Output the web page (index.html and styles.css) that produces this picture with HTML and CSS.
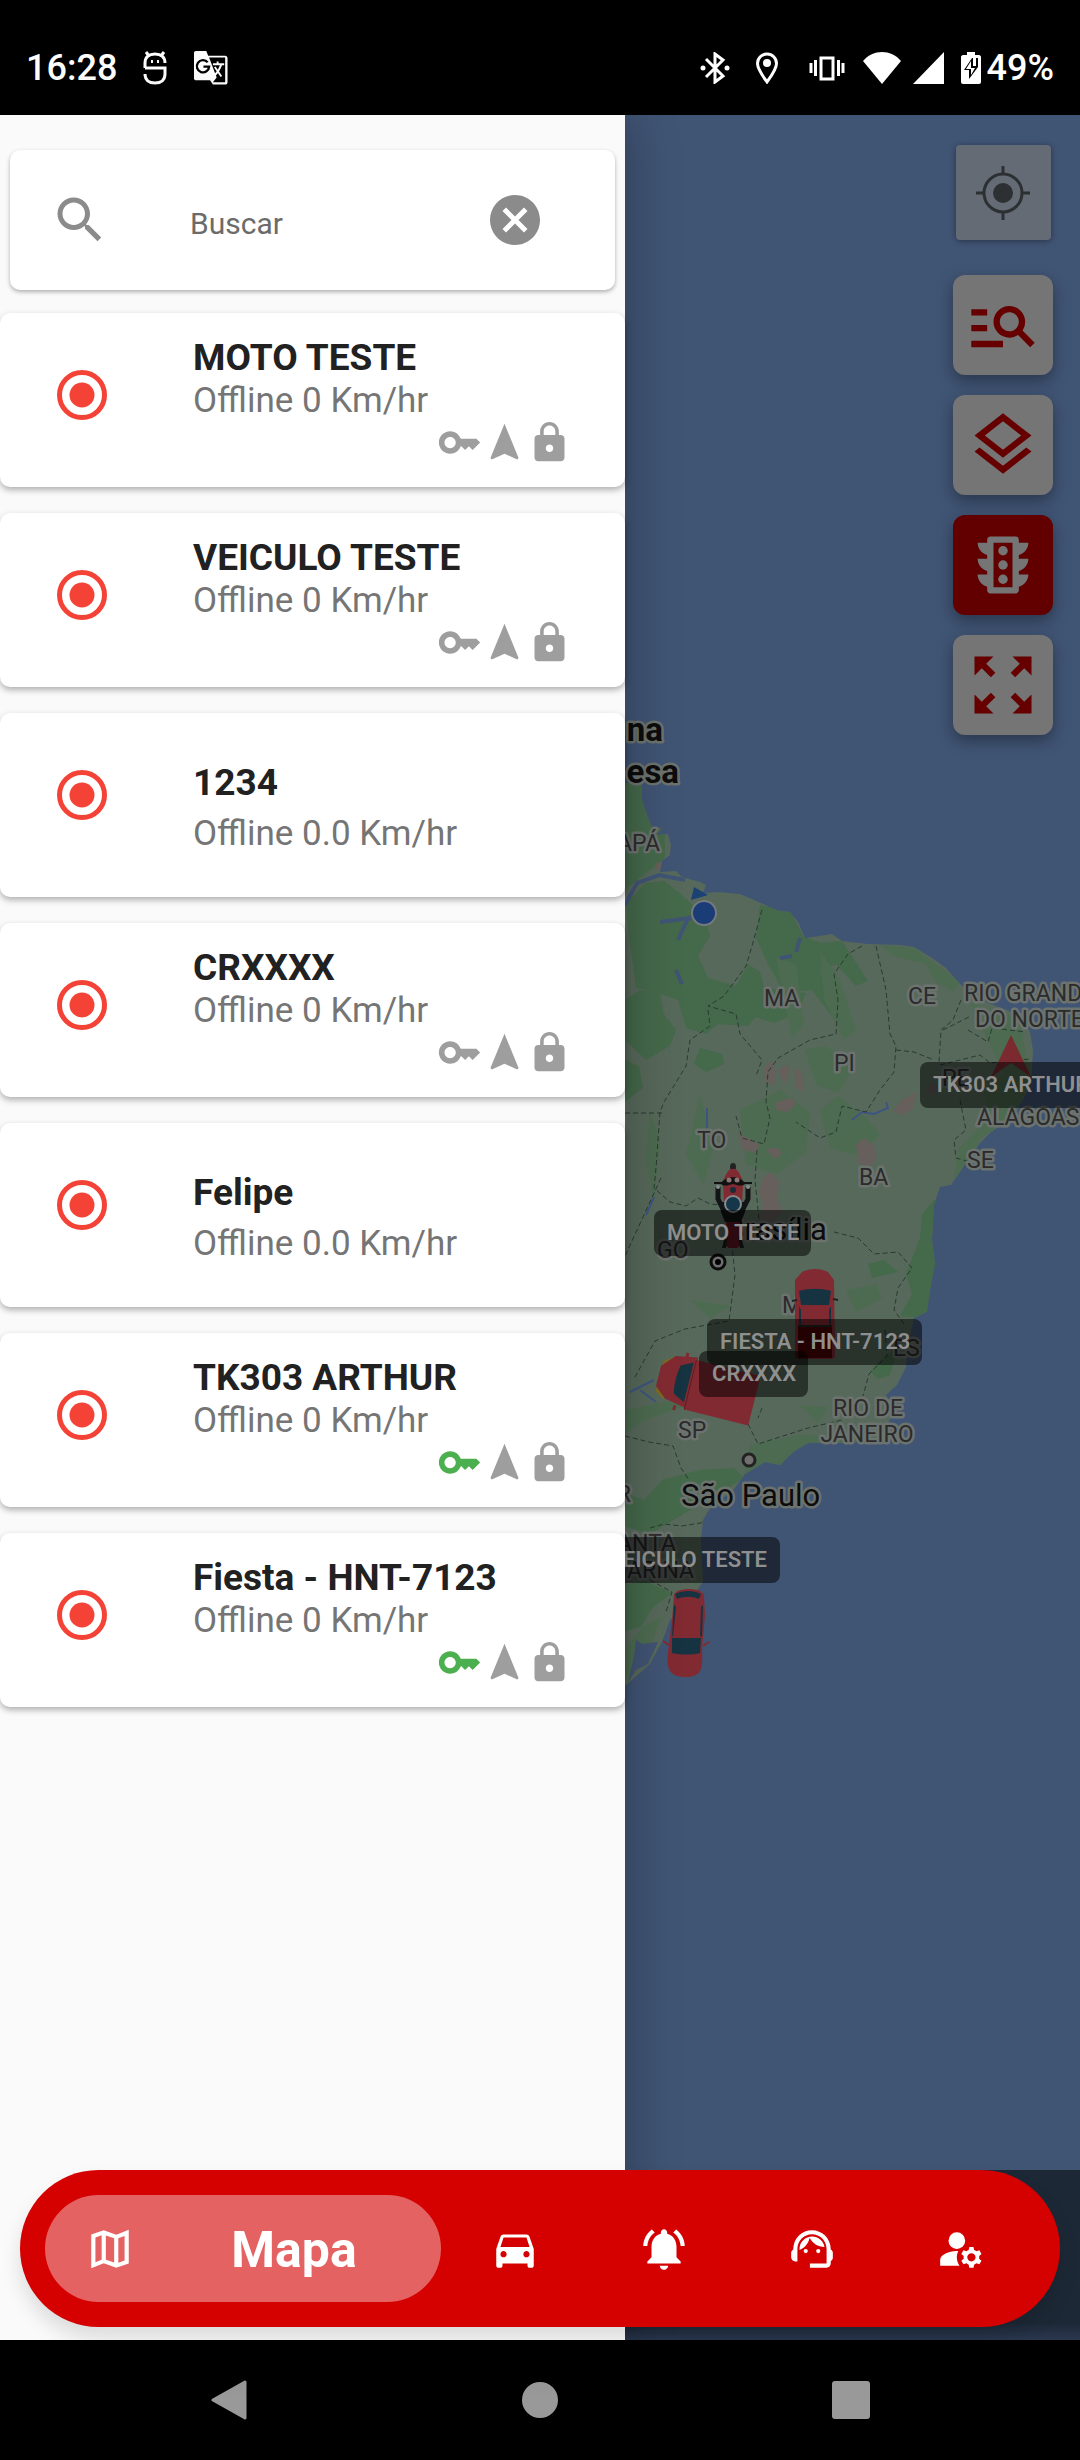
FILE: index.html
```html
<!DOCTYPE html>
<html lang="pt-BR">
<head>
  <meta charset="UTF-8">
  <meta name="viewport" content="width=device-width, initial-scale=1.0">
  <title>Mapa</title>
  <link rel="stylesheet" href="styles.css">
</head>
<body>

  <!-- icon sprite -->
  <svg class="sprite" aria-hidden="true">
    <symbol id="i-radio" viewBox="0 0 24 24"><circle cx="12" cy="12" r="9" fill="none" stroke="currentColor" stroke-width="2"/><circle cx="12" cy="12" r="5"/></symbol>
    <symbol id="i-key" viewBox="0 0 24 24"><path d="M21 10h-8.35C11.83 7.67 9.61 6 7 6c-3.31 0-6 2.69-6 6s2.69 6 6 6c2.61 0 4.83-1.67 5.65-4H13l2 2 2-2 2 2 4-4.04L21 10zM7 15c-1.65 0-3-1.35-3-3s1.35-3 3-3 3 1.35 3 3-1.35 3-3 3z"/></symbol>
    <symbol id="i-nav" viewBox="0 0 24 24"><path d="M12 2L4.5 20.29l.71.71L12 18l6.79 3 .71-.71z"/></symbol>
    <symbol id="i-lock" viewBox="0 0 24 24"><path d="M18 8h-1V6c0-2.76-2.24-5-5-5S7 3.24 7 6v2H6c-1.1 0-2 .9-2 2v10c0 1.1.9 2 2 2h12c1.1 0 2-.9 2-2V10c0-1.1-.9-2-2-2zm-6 9c-1.1 0-2-.9-2-2s.9-2 2-2 2 .9 2 2-.9 2-2 2zm3.1-9H8.9V6c0-1.71 1.39-3.1 3.1-3.1 1.71 0 3.1 1.39 3.1 3.1v2z"/></symbol>
  </svg>

  <header class="statusbar">
    <div class="status-left">
      <span>16:28</span>
      <svg class="st-app" viewBox="0 0 24 34" fill="none" stroke="#fff" stroke-width="3"><path d="M2 17h20v6c0 6-4 9-10 9s-10-3-10-9M22 12c0-6-4-9-10-9S2 6 2 12v5M3 1l3 4M21 1l-3 4"/><path d="M8 10.500h2M14 10.500h2"/></svg>
      <svg class="st-app st-translate" viewBox="0 0 36 36"><path fill="#fff" d="M2 0h11l2 5h18c1.500 0 2.500 1 2.500 2.500V33c0 1.500-1 2.500-2.500 2.500H20L17 31H2c-1 0-2-1-2-2V2C0 1 1 0 2 0z"/><path d="M16 7h17v26H20l4-5z"/><path fill="none" stroke="#000" stroke-width="2.500" d="M14.500 12a6.500 6.500 0 1 0 1.500 4.500H10"/><path fill="none" stroke="#fff" stroke-width="2" d="M20 14h12M25 11v3M29 14c-2 6-4 9-8 13M22 17l7 10"/></svg>
    </div>
    <div class="status-right">
      <svg class="st-52" viewBox="0 0 28 32"><path fill="none" stroke="#fff" stroke-width="3" d="M5 7l17 17-8 6V2l8 6L5 25"/><circle cx="2" cy="16" r="2.500" fill="#fff"/><circle cx="26" cy="16" r="2.500" fill="#fff"/></svg>
      <svg class="st-52" viewBox="0 0 24 32"><path fill="none" stroke="#fff" stroke-width="3" d="M12 30C7 23 2.500 17 2.500 11.500a9.500 9.500 0 0 1 19 0C21.500 17 17 23 12 30z"/><circle cx="12" cy="11" r="4" fill="#fff"/></svg>
      <svg class="st-68" viewBox="0 0 36 32"><path fill="none" stroke="#fff" stroke-width="3" d="M12 6h12v21H12zM6.500 8v16M2 11v10M29.500 8v16M34 11v10"/></svg>
      <svg class="st-42" viewBox="0 0 38 32"><path fill="#fff" d="M19 32L0 9C10-3 28-3 38 9z"/></svg>
      <svg class="st-52" viewBox="0 0 32 32"><path fill="#fff" d="M0 32L31 0v32z"/></svg>
      <svg class="st-32" viewBox="0 0 20 32"><path fill="#fff" d="M6 0h8v3h4c1 0 2 1 2 2v25c0 1-1 2-2 2H2c-1 0-2-1-2-2V5c0-1 1-2 2-2h4z"/><path d="M11 6L3 18h5v9l9-12V6h-2v8h-3V6z"/><path fill="#fff" d="M10 9l-5 8h5v6l4-7h-4z"/></svg>
      <span>49%</span>
    </div>
  </header>

  <main class="app">
    <aside class="drawer">
      <form class="search">
        <svg class="icon" viewBox="0 0 24 24"><path d="M15.500 14h-.79l-.28-.27C15.410 12.590 16 11.110 16 9.500 16 5.910 13.090 3 9.500 3S3 5.910 3 9.500 5.910 16 9.500 16c1.610 0 3.090-.59 4.230-1.570l.27.28v.79l5 4.990L20.490 19l-4.990-5zm-6 0C7.010 14 5 11.990 5 9.500S7.010 5 9.500 5 14 7.010 14 9.500 11.990 14 9.500 14z"/></svg>
        <input type="text" placeholder="Buscar" aria-label="Buscar">
        <button type="button" aria-label="Limpar"><svg class="icon" viewBox="0 0 24 24"><path d="M12 2C6.470 2 2 6.470 2 12s4.470 10 10 10 10-4.470 10-10S17.530 2 12 2zm5 13.590L15.590 17 12 13.410 8.410 17 7 15.590 10.590 12 7 8.410 8.410 7 12 10.590 15.590 7 17 8.410 13.410 12 17 15.590z"/></svg></button>
      </form>

      <ul class="devices">
        <li class="device">
          <svg class="icon status"><use href="#i-radio"/></svg>
          <div class="info">
            <h2>MOTO TESTE</h2>
            <p>Offline 0 Km/hr</p>
            <div class="sensors"><svg><use href="#i-key"/></svg><svg><use href="#i-nav"/></svg><svg><use href="#i-lock"/></svg></div>
          </div>
        </li>
        <li class="device">
          <svg class="icon status"><use href="#i-radio"/></svg>
          <div class="info">
            <h2>VEICULO TESTE</h2>
            <p>Offline 0 Km/hr</p>
            <div class="sensors"><svg><use href="#i-key"/></svg><svg><use href="#i-nav"/></svg><svg><use href="#i-lock"/></svg></div>
          </div>
        </li>
        <li class="device no-sensors">
          <svg class="icon status"><use href="#i-radio"/></svg>
          <div class="info">
            <h2>1234</h2>
            <p>Offline 0.0 Km/hr</p>
          </div>
        </li>
        <li class="device">
          <svg class="icon status"><use href="#i-radio"/></svg>
          <div class="info">
            <h2>CRXXXX</h2>
            <p>Offline 0 Km/hr</p>
            <div class="sensors"><svg><use href="#i-key"/></svg><svg><use href="#i-nav"/></svg><svg><use href="#i-lock"/></svg></div>
          </div>
        </li>
        <li class="device no-sensors">
          <svg class="icon status"><use href="#i-radio"/></svg>
          <div class="info">
            <h2>Felipe</h2>
            <p>Offline 0.0 Km/hr</p>
          </div>
        </li>
        <li class="device">
          <svg class="icon status"><use href="#i-radio"/></svg>
          <div class="info">
            <h2>TK303 ARTHUR</h2>
            <p>Offline 0 Km/hr</p>
            <div class="sensors"><svg class="on"><use href="#i-key"/></svg><svg><use href="#i-nav"/></svg><svg><use href="#i-lock"/></svg></div>
          </div>
        </li>
        <li class="device">
          <svg class="icon status"><use href="#i-radio"/></svg>
          <div class="info">
            <h2>Fiesta - HNT-7123</h2>
            <p>Offline 0 Km/hr</p>
            <div class="sensors"><svg class="on"><use href="#i-key"/></svg><svg><use href="#i-nav"/></svg><svg><use href="#i-lock"/></svg></div>
          </div>
        </li>
      </ul>
    </aside>

    <section class="map-pane">
      <svg class="map" viewBox="625 115 455 2055" preserveAspectRatio="xMinYMin slice">
        <defs>
          <clipPath id="land"><path id="coast" d="M620 783L642 783 642 800 647 815 652 828 662 828 656 835 668 834 671 845 670 855 662 861 660 872 676 871 682 877 700 882 706 885 703 893 718 892 740 894 752 899 765 905 779 911 790 912 798 922 805 938 813 937 832 934 842 941 868 944 900 945 914 947 932 958 946 968 960 984 980 1000 1020 1015 1030 1032 1033 1050 1032 1072 1027 1092 1013 1117 990 1133 980 1143 966 1163 951 1185 940 1187 934 1205 932 1240 935 1264 930 1290 927 1312 914 1318 908 1345 906 1367 897 1385 886 1395 895 1410 880 1438 850 1443 808 1443 793 1452 780 1465 765 1462 745 1474 732 1492 712 1505 703 1520 701 1540 703 1582 690 1600 670 1620 662 1642 650 1664 625 1686 620 1690z"/></clipPath>
        </defs>
        <rect x="625" y="115" width="455" height="2055" fill="#405474"/>
        <use href="#coast" fill="#57695b"/>

        <g clip-path="url(#land)">
          <g fill="#45694b">
            <path d="M620 783h30l5 25 10 20v30l-40 32z"/>
            <path d="M625 905l20-22 20-2 18 15 22 20 5 20-12 20 10 22 28 8 12-22 12 8 8 30-20 24-30-2-12 10-20-6-8-28-22-8-20-4z"/>
            <path d="M760 905l30 6 14 26 18 6 20-2 26 40-12 5-20-22-16 8 18 34-6 10-20-26-28 2-16-28-12-26z"/>
            <path d="M754 993l20-4 32 4-8 20-24 10-24-8zM640 990l20 2 4 22 12 16-6 16-24 14-21-20v-40z"/>
            <path d="M625 1060l14 6 4 22-18 14zM700 1048l22 6 2 10-18 8-12-8z"/>
            <path d="M934 1200l-12 14-2 24-14 36 6 20-12 22 16 2 12-8 10-60 2-50zM884 1260l-16 4 4 14 26-6zM900 1345l-10 30-12 4-8-8 14-14z"/>
            <path d="M700 1470l-38 10-18 20-20-8v34l26 8 30-18 24-14 40-24-10-10zM625 1585l20-4 28 12-20 14-12 20-16 4z"/>
          </g>
          <g fill="#4d6b50">
            <path d="M880 945l34 3 46 34-6 10-18-10-10-18-32-8zM970 1003l50 16 10 60-14 34-36 26-12 30-14 10 4-30 30-30-4-26 20-20z"/>
            <path d="M650 1110l10 30-6 60-8-40zM700 1095l14 50-10 40-18-30zM740 1110l40-20 30 22-4 40-30 22-30-10z"/>
            <path d="M805 1050l20-4 30 20-16 26-22-6zM820 1110l18-14 26 20 16 18-22 22-28-8z"/>
            <path d="M820 950l20 30 16 50-12 10-20-40zM776 958l20 6 8 60-12 14z"/>
            <path d="M625 1410l50-10 10 6-40 14-20 14zM690 1300l40 6-20 12zM846 1290l30-6 6 14-26 14zM800 1405l28 2-10 16zM625 1650l18-24 20-10-18 40-20 24z"/>
            <path d="M750 1445l50-10 60 2 20-12-4 20-70 2-34 30-30 4z"/>
          </g>
          <g fill="#665f5c">
            <path d="M764 1068l8-8 4 12-2 14-8-4zM778 1070l10-6 2 10-6 10zM794 1068l8 4 2 20-8-4zM776 1102l16-4 4 6-8 8-12-2z"/>
            <path d="M738 1133l12 6 10 6-6 8-12-4zM766 1149l12-1 4 6-8 5zM763 1178l8-6 8 10-2 18 6 12-18 16-6-10 4-14-4-12z"/>
            <path d="M856 1144l8-6 10 8 2 14-8 8-10-6zM893 1112l8-12 10-5 6-4-4 18-10 6zM926 1088l10-5 2 8-8 4zM655 864l10-4 2 8-12 2z"/>
          </g>
          <g fill="none" stroke="#405474" stroke-width="4">
            <path d="M625 905l12-22 22-8 26 5M660 922l30-4 12-8M678 940l10-22M676 970l6 14M800 938l-4 14M780 958l12-2"/>
          </g>
          <g fill="none" stroke="#3d5582" stroke-width="2">
            <path d="M852 1120l10-8 12 2 14-6-2-6M707 1108v26M640 1390l16 12M630 1392l24-12M646 1215l8-18"/>
          </g>
          <path fill="#405474" d="M636 1640l6 4 16-2-10 22-12 6-8 12 6-26z"/>
          <g class="borders">
            <path d="M762 910l-10 36-6 20-22 30-16 10 28 8 4 20 22 26-6 16"/>
            <path d="M708 1010l2 16-20 14-4 26-22 36-4 10-4 56-2 20 16 14 16 4 12-8 12 6 24 2"/>
            <path d="M862 946l-14 8-14 20 4 26-2 34-26 6-32 18-10 14-2 30 4 16-6 26-22-6-6-22"/>
            <path d="M876 946l10 44 4 44 6 12-2 26-14 18-14 22-24-6-6 26-16 6-24-16M896 1050l18 2 20 8"/>
            <path d="M961 1000l-8 20-12 10-2 32M943 1030l28-14M968 1030l20 12 4-14 34 4M960 1100l6 30-12 10 2 18 14 4M940 1065l40-10 10 8 40-4"/>
            <path d="M625 1113h38M661 1178l-36 78M757 1150l-2 30 4 40M834 1232l24 6 16 16 24-2 14 16-14 20-4 22 10 14M731 1235l4 40-6 46-44 8-30 12-20 36M885 1330l2 26-18 18-6 22"/>
            <path d="M625 1436l24 6 24 4 8 22 8 12M748 1424l10 20 50-16 34-8M650 1528l14-4 18 2 24-4M650 1580l22 12-6 20M762 1408l-4 10"/>
          </g>
        </g>

        <!-- place names -->
        <g class="labels">
          <g class="country"><text x="663" y="741" text-anchor="end">na</text><text x="679" y="783" text-anchor="end">esa</text></g>
          <g class="state">
            <text x="660" y="851" text-anchor="end">APÁ</text>
            <text x="764" y="1006">MA</text>
            <text x="908" y="1004">CE</text>
            <text x="964" y="1001">RIO GRANDE</text>
            <text x="975" y="1027">DO NORTE</text>
            <text x="834" y="1071">PI</text>
            <text x="942" y="1086">PE</text>
            <text x="977" y="1125">ALAGOAS</text>
            <text x="697" y="1148">TO</text>
            <text x="967" y="1168">SE</text>
            <text x="859" y="1185">BA</text>
            <text x="657" y="1258">GO</text>
            <text x="782" y="1313">M</text>
            <text x="893" y="1356">ES</text>
            <text x="678" y="1438">SP</text>
            <text x="868" y="1416" text-anchor="middle">RIO DE</text>
            <text x="867" y="1442" text-anchor="middle">JANEIRO</text>
            <text x="631" y="1502" text-anchor="end">R</text>
            <text x="676" y="1551" text-anchor="end">ANTA</text>
            <text x="694" y="1578" text-anchor="end">ARINA</text>
          </g>
          <g class="city"><text x="827" y="1240" text-anchor="end">Brasília</text><text x="681" y="1506">São Paulo</text></g>
        </g>
        <circle cx="718" cy="1262" r="7" fill="#707070" stroke="#0c0c0c" stroke-width="3"/><circle cx="718" cy="1262" r="3"/>
        <circle cx="749" cy="1460" r="6" fill="#707070" stroke="#222" stroke-width="3"/>

        <!-- my position -->
        <path fill="#1b4175" d="M694 887l14 8-17 5z"/>
        <circle cx="704" cy="913" r="12" fill="#1a3d77" stroke="#76797e" stroke-width="2"/>

        <!-- vehicles -->
        <path fill="#7b2a30" d="M1011 1035l20 42-20-14-20 14z"/>
        <g class="moto">
          <path fill="#5e1520" d="M727 1216h12l3 28-5 4h-8l-5-4z"/>
          <path fill="#1a1a1a" d="M725 1236l-3 12h4l2-12zM741 1236l3 12h-4l-2-12z"/>
          <ellipse cx="733" cy="1167" rx="3" ry="4" fill="#222"/>
          <path fill="#822a32" d="M730 1169h6c4 4 6 9 7 14l-1 22h-18l-1-22c1-5 3-10 7-14z"/>
          <path fill="none" stroke="#111" stroke-width="2" d="M714 1183h8M752 1183h-8"/>
          <path fill="#111" d="M721 1184c3-9 21-9 24 0-3 3-8 1-12 0-4 1-9 3-12 0z"/>
          <circle cx="729" cy="1180" r="2.500" fill="#8a7776"/><circle cx="737" cy="1180" r="2.500" fill="#8a7776"/>
          <circle cx="733" cy="1190" r="3" fill="#1b2b38"/>
          <path fill="none" stroke="#121515" stroke-width="5" stroke-linejoin="round" d="M718 1187v12l6 12M748 1187v12l-6 12"/>
          <path fill="#121515" d="M720 1202h26l-1 10-4 10h-16l-4-10z"/>
          <circle cx="718" cy="1187" r="2" fill="#858b8e"/><circle cx="748" cy="1187" r="2" fill="#858b8e"/>
          <circle cx="733" cy="1204" r="8" fill="#16374a" stroke="#858b8e" stroke-width="2"/>
        </g>
        <g class="pickup">
          <path fill="#822a32" d="M802 1272c8-4 18-4 26 0l6 8 1 76c0 2-2 3-4 3h-33c-2 0-3-1-3-3v-76z"/>
          <path fill="#163342" d="M799 1291c10-3 22-3 32 0l-2 14h-28zM799 1306l2 4v16l-2-2zM831 1306l-2 4v16l2-2z"/>
          <path fill="#4a0006" d="M798 1326h34v32h-34z"/>
          <path stroke="#222" stroke-width="2" d="M792 1301l5-1M838 1300l-5-1M798 1326h34"/>
        </g>
        <g class="truck" transform="rotate(14 705 1388)">
          <path fill="#7d6a20" d="M658 1372l10-7v44l-10-6z"/>
          <path fill="#822a32" d="M657 1377l12-13 22-4v52l-22-4-12-10z"/>
          <path fill="#163342" d="M676 1372l12-6v41l-12-6c-2-9-2-20 0-29z"/>
          <path fill="#822a32" d="M690 1363h66v51h-66z"/>
          <path stroke="#5e1d23" d="M690 1363v51"/>
          <path stroke="#822a32" stroke-width="3" d="M680 1363v-5M680 1412v5"/>
        </g>
        <g class="car">
          <path fill="#822a32" d="M674 1595c2-8 28-8 30 0l1 20-3 35c1 18 0 27-16 27-15 0-20-6-18-24l4-33z"/>
          <path fill="#163342" d="M675 1594c8-4 19-4 26 0l-2 5c-7-3-15-3-22 0zM672 1638h29l-1 15c-8 2-19 2-28 0zM674 1605l-2 32 1-1 3-29zM703 1605l-1 32-2-1 1-29z"/>
          <path stroke="#822a32" stroke-width="2" d="M663 1641l6 4M709 1642l-6 4"/>
        </g>

        <!-- vehicle tags -->
        <g class="tags">
          <rect x="920" y="1062" width="190" height="46" rx="8"/>
          <rect x="654" y="1210" width="157" height="46" rx="8"/>
          <rect x="707" y="1319" width="215" height="46" rx="8"/>
          <rect x="699" y="1351" width="109" height="46" rx="8"/>
          <rect x="600" y="1537" width="180" height="46" rx="8"/>
          <text x="933" y="1092">TK303 ARTHUR</text>
          <text x="667" y="1240">MOTO TESTE</text>
          <text x="720" y="1349">FIESTA - HNT-7123</text>
          <text x="712" y="1381">CRXXXX</text>
          <text x="767" y="1567" text-anchor="end">EICULO TESTE</text>
        </g>
      </svg>
      <div class="map-bottom"></div>

      <div class="controls">
        <button class="locate" aria-label="Minha localização"><svg viewBox="0 0 54 54"><circle cx="27" cy="27" r="19" fill="none" stroke="#2d3033" stroke-width="3"/><circle cx="27" cy="27" r="10" fill="#2d3033"/><path stroke="#2d3033" stroke-width="3" d="M27 0v8M27 46v8M0 27h8M46 27h8"/></svg></button>
        <button aria-label="Lista"><svg viewBox="0 0 24 24"><path d="M7 9H2V7h5v2zm0 3H2v2h5v-2zm13.590 7l-3.830-3.830c-.8.52-1.740.83-2.760.83-2.760 0-5-2.240-5-5s2.240-5 5-5 5 2.240 5 5c0 1.020-.31 1.960-.83 2.750L22 17.590 20.590 19zM17 11c0-1.650-1.350-3-3-3s-3 1.350-3 3 1.350 3 3 3 3-1.350 3-3zM2 19h10v-2H2v2z"/></svg></button>
        <button aria-label="Camadas"><svg viewBox="0 0 24 24"><path d="M11.990 18.540l-7.370-5.730L3 14.070l9 7 9-7-1.630-1.270zM12 16l7.360-5.730L21 9l-9-7-9 7 1.630 1.270L12 16zm0-11.470L17.740 9 12 13.470 6.260 9 12 4.530z"/></svg></button>
        <button class="active" aria-label="Trânsito"><svg viewBox="0 0 24 24"><path fill-rule="evenodd" d="M20 10h-3V8.860c1.720-.45 3-2 3-3.860h-3V4c0-.55-.45-1-1-1H8c-.55 0-1 .45-1 1v1H4c0 1.860 1.280 3.410 3 3.860V10H4c0 1.860 1.280 3.410 3 3.860V15H4c0 1.860 1.280 3.410 3 3.860V20c0 .55.45 1 1 1h8c.55 0 1-.45 1-1v-1.140c1.720-.45 3-2 3-3.860h-3v-1.140c1.720-.45 3-2 3-3.860zM9 5h6v14H9z"/><circle cx="12" cy="7.500" r="1.500"/><circle cx="12" cy="12" r="1.500"/><circle cx="12" cy="16.500" r="1.500"/></svg></button>
        <button aria-label="Enquadrar"><svg viewBox="0 0 24 24"><path d="M15 3l2.300 2.300-2.890 2.870 1.420 1.420L18.700 6.700 21 9V3zM3 9l2.300-2.300 2.870 2.890 1.420-1.420L6.700 5.300 9 3H3zm6 12l-2.300-2.300 2.890-2.870-1.420-1.420L5.300 17.300 3 15v6zm12-6l-2.300 2.300-2.870-2.890-1.420 1.420 2.890 2.870L15 21h6z"/></svg></button>
      </div>
    </section>

    <nav class="tabbar">
      <a href="#mapa" class="current">
        <svg viewBox="0 0 24 24"><path fill-rule="evenodd" d="M15 5.100L9 3 3 5.020v16.200l6-2.330 6 2.100 6-2.020V2.770zM5 6.460l3-1.010v11.700l-3 1.160zM10 5.470l4 1.400v11.660l-4-1.400zM19 17.540l-3 1.010V6.860l3-1.160z"/></svg>
        <span>Mapa</span>
      </a>
      <a href="#veiculos" aria-label="Veículos"><svg viewBox="0 0 24 24"><path d="M18.920 6.010C18.720 5.420 18.160 5 17.500 5h-11c-.66 0-1.210.42-1.420 1.010L3 12v8c0 .55.45 1 1 1h1c.55 0 1-.45 1-1v-1h12v1c0 .55.45 1 1 1h1c.55 0 1-.45 1-1v-8l-2.080-5.990zM6.500 16c-.83 0-1.500-.67-1.500-1.500S5.670 13 6.500 13s1.500.67 1.500 1.500S7.330 16 6.500 16zm11 0c-.83 0-1.500-.67-1.500-1.500s.67-1.500 1.500-1.500 1.500.67 1.500 1.500-.67 1.500-1.500 1.500zM5 11l1.500-4.500h11L19 11H5z"/></svg></a>
      <a href="#alertas" aria-label="Alertas"><svg viewBox="0 0 24 24"><path d="M7.580 4.080L6.150 2.650C3.750 4.480 2.170 7.300 2.030 10.500h2c.15-2.650 1.510-4.970 3.550-6.420zm12.390 6.420h2c-.15-3.200-1.730-6.020-4.120-7.850l-1.420 1.430c2.020 1.450 3.390 3.770 3.540 6.420zM18 11c0-3.070-1.640-5.640-4.500-6.320V4c0-.83-.67-1.500-1.500-1.500s-1.500.67-1.500 1.500v.68C7.630 5.360 6 7.920 6 11v5l-2 2v1h16v-1l-2-2v-5zm-6 11c.14 0 .27-.01.4-.04.65-.14 1.180-.58 1.440-1.180.1-.24.15-.5.15-.78h-4c.01 1.100.9 2 2.010 2z"/></svg></a>
      <a href="#suporte" aria-label="Suporte"><svg viewBox="0 0 24 24"><path d="M21 12.220C21 6.730 16.740 3 12 3c-4.690 0-9 3.650-9 9.280-.6.340-1 .98-1 1.720v2c0 1.100.9 2 2 2h1v-6.100c0-3.870 3.130-7 7-7s7 3.130 7 7V19h-8v2h8c1.100 0 2-.9 2-2v-1.220c.59-.31 1-.92 1-1.640v-2.300c0-.7-.41-1.310-1-1.620z"/><circle cx="9" cy="13" r="1"/><circle cx="15" cy="13" r="1"/><path d="M18 11.030C17.520 8.180 15.040 6 12.050 6c-3.030 0-6.290 2.510-6.030 6.450 2.470-1.010 4.330-3.210 4.860-5.890 1.310 2.630 4 4.440 7.120 4.470z"/></svg></a>
      <a href="#conta" aria-label="Conta"><svg viewBox="0 0 24 24"><circle cx="10" cy="8" r="4"/><path d="M10.670 13.020C10.450 13.010 10.230 13 10 13c-2.420 0-4.680.67-6.610 1.820C2.510 15.340 2 16.320 2 17.350V20h9.260C10.470 18.870 10 17.490 10 16c0-1.070.25-2.070.67-2.980zM20.750 16c0-.22-.03-.42-.06-.63l1.140-1.010-1-1.730-1.450.49c-.32-.27-.68-.48-1.080-.63L18 11h-2l-.3 1.490c-.4.15-.76.36-1.080.63l-1.450-.49-1 1.730 1.140 1.010c-.03.21-.06.41-.06.63s.03.42.06.63l-1.140 1.010 1 1.730 1.450-.49c.32.27.68.48 1.080.63L16 21h2l.3-1.490c.4-.15.76-.36 1.080-.63l1.450.49 1-1.730-1.140-1.010c.03-.21.06-.41.06-.63zM17 18c-1.100 0-2-.9-2-2s.9-2 2-2 2 .9 2 2-.9 2-2 2z"/></svg></a>
    </nav>
  </main>

  <footer class="sysnav">
    <button aria-label="Voltar"><svg viewBox="0 0 40 40"><path stroke="#999" stroke-width="3" stroke-linejoin="round" d="M4 20L36 2v36z"/></svg></button>
    <button aria-label="Início"><svg viewBox="0 0 40 40"><circle cx="20" cy="20" r="18"/></svg></button>
    <button aria-label="Recentes"><svg viewBox="0 0 40 40"><rect x="1" y="1" width="38" height="38" rx="3"/></svg></button>
  </footer>

</body>
</html>
```
FILE: styles.css
```css
* {
  box-sizing: border-box;
}

body {
  margin: 0;
  min-height: 100vh;
  display: flex;
  flex-direction: column;
  background: #000;
  font-family: Roboto, "Liberation Sans", sans-serif;
}

button {
  border: 0;
  padding: 0;
  background: none;
  cursor: pointer;
}

svg {
  display: block;
  flex: none;
}

.sprite {
  position: absolute;
  width: 0;
  height: 0;
}

.icon {
  width: 60px;
  height: 60px;
  fill: currentColor;
}

/* status bar */
.statusbar {
  height: 115px;
  padding: 20px 26px 0;
  display: flex;
  justify-content: space-between;
  align-items: center;
  color: #fff;
  font-size: 36px;
  font-weight: 500;
}

.status-left, .status-right {
  display: flex;
  align-items: center;
}

.status-left {
  gap: 24px;
}

.status-right svg {
  height: 32px;
}

.st-app {
  width: 28px;
  height: 34px;
}

.st-translate {
  width: 36px;
}

.st-32 { width: 32px; }
.st-42 { width: 42px; }
.st-52 { width: 52px; }
.st-68 { width: 68px; }

/* app */
.app {
  flex: 1;
  position: relative;
  display: grid;
  grid-template-columns: minmax(0, 625fr) minmax(0, 455fr);
}

.drawer {
  position: relative;
  z-index: 1;
  padding-top: 35px;
  background: #fafafa;
  box-shadow: 0 0 50px rgba(0, 0, 0, 0.3);
}

.search {
  height: 140px;
  margin: 0 10px 23px;
  padding: 0 40px;
  display: flex;
  align-items: center;
  background: #fff;
  border-radius: 10px;
  box-shadow: 0 2px 4px rgba(0, 0, 0, 0.3);
  color: #8b8b8b;
}

.search input {
  flex: 1;
  min-width: 0;
  margin-left: 80px;
  padding: 6px 0 0;
  border: 0;
  outline: 0;
  background: none;
  font: 30px Roboto, "Liberation Sans", sans-serif;
  color: #212121;
}

.search input::placeholder {
  color: #6b6b6b;
  opacity: 1;
}

.search button {
  margin-right: 30px;
  color: #8b8b8b;
}

.devices {
  margin: 0;
  padding: 0 0 180px;
  list-style: none;
  display: flex;
  flex-direction: column;
  gap: 26px;
}

.device {
  display: flex;
  align-items: flex-start;
  padding: 23px 53px 22px 52px;
  background: #fff;
  border-radius: 10px;
  box-shadow: 0 3px 6px rgba(0, 0, 0, 0.3);
}

.status {
  margin: 29px 81px 0 0;
  color: #f44336;
}

.info {
  flex: 1;
}

.device h2 {
  margin: 0;
  font-size: 37px;
  line-height: 43px;
  font-weight: 700;
  color: #212121;
}

.device p {
  margin: 0;
  font-size: 35px;
  line-height: 44px;
  color: #757575;
}

.sensors {
  display: flex;
  justify-content: flex-end;
  margin-top: -3px;
}

.sensors svg {
  width: 45px;
  height: 45px;
  fill: #9e9e9e;
}

.sensors .on {
  fill: #4caf50;
}

.no-sensors {
  padding-top: 48px;
  padding-bottom: 41px;
}

.no-sensors .status {
  margin-top: 4px;
}

.no-sensors p {
  margin-top: 8px;
}

/* map */
.map-pane {
  position: relative;
  display: flex;
  flex-direction: column;
  background: #405474;
}

.map {
  flex: 1;
  width: 100%;
  min-height: 0;
}

.map-bottom {
  height: 170px;
  background: linear-gradient(#1d2836 90%, #2a3750);
}

.borders {
  fill: none;
  stroke: #2a3a31;
  stroke-width: 1;
  stroke-dasharray: 5 3;
}

.labels text {
  paint-order: stroke;
  stroke: #6c736f;
  stroke-width: 5px;
  stroke-linejoin: round;
}

.state {
  font-size: 23px;
  fill: #2b2b2b;
}

.city {
  font-size: 31px;
  fill: #0c0c0c;
}

.country {
  font-size: 33px;
  font-weight: 700;
  fill: #0c0c0c;
}

.tags {
  font-size: 22px;
  font-weight: 600;
  fill: #8f8f8f;
}

.tags rect {
  fill: rgba(0, 0, 0, 0.52);
}

.controls {
  position: absolute;
  top: 30px;
  right: 27px;
  display: flex;
  flex-direction: column;
  align-items: center;
  gap: 20px;
}

.controls button {
  width: 100px;
  height: 100px;
  display: grid;
  place-items: center;
  border-radius: 12px;
  background: #757575;
  box-shadow: 0 6px 16px rgba(0, 0, 0, 0.35);
}

.controls svg {
  width: 76px;
  height: 76px;
  fill: #660000;
}

.controls .active {
  background: #620000;
}

.controls .active svg {
  fill: #757575;
}

.controls .locate {
  width: 95px;
  height: 95px;
  margin-bottom: 15px;
  border-radius: 4px;
  background: #656b75;
  box-shadow: 0 1px 6px rgba(0, 0, 0, 0.4);
}

.controls .locate svg {
  width: 54px;
  height: 54px;
}

/* bottom tabs, float over drawer and map */
.tabbar {
  position: absolute;
  z-index: 2;
  left: 20px;
  right: 20px;
  bottom: 13px;
  height: 157px;
  padding: 25px;
  display: grid;
  grid-template-columns: 8fr 3fr 3fr 3fr 3fr;
  background: #d50000;
  border-radius: 79px;
  box-shadow: 0 12px 20px rgba(0, 0, 0, 0.12);
}

.tabbar a {
  display: grid;
  place-items: center;
  color: #fff;
  text-decoration: none;
}

.tabbar svg {
  width: 50px;
  height: 50px;
  fill: #fff;
}

.tabbar .current {
  grid-template-columns: 50px 1fr;
  padding: 0 40px;
  border-radius: 54px;
  background: #e56262;
  font-size: 50px;
  font-weight: 700;
}

.current span {
  padding: 2px 0 0 52px;
}

/* system navigation */
.sysnav {
  height: 120px;
  padding: 0 74px;
  display: flex;
  justify-content: space-around;
  align-items: center;
}

.sysnav svg {
  width: 40px;
  height: 40px;
  fill: #999;
}
```
